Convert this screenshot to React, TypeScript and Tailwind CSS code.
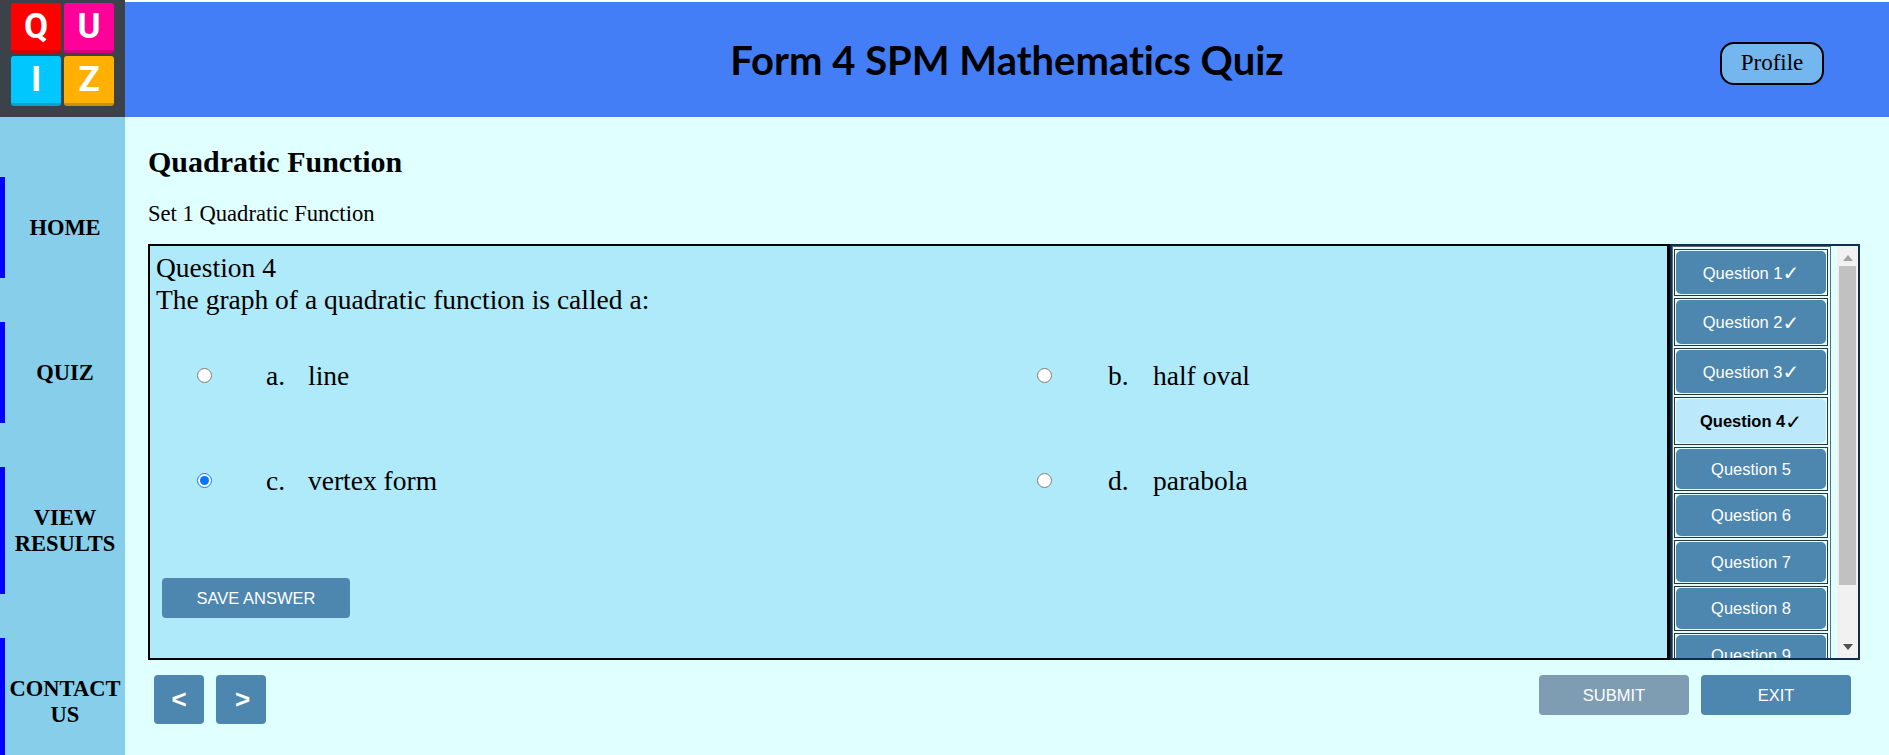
const nav = [
  { label: "HOME", h: "h-[101px]" },
  { label: "QUIZ", h: "h-[101px]" },
  { label: "VIEW RESULTS", h: "h-[127px]" },
  { label: "CONTACT US", h: "h-[127px]" },
];

const tiles = [
  { l: "Q", bg: "bg-[#ff0000]", b: "border-[#d80000]" },
  { l: "U", bg: "bg-[#ff0099]", b: "border-[#d80082]" },
  { l: "I", bg: "bg-[#00c8ff]", b: "border-[#00a3d0]" },
  { l: "Z", bg: "bg-[#ffb000]", b: "border-[#d08f00]" },
];

const questions = [
  { t: "Question 1", done: true, h: "h-[47px]" },
  { t: "Question 2", done: true, h: "h-[48px]" },
  { t: "Question 3", done: true, h: "h-[47px]" },
  { t: "Question 4", done: true, h: "h-[48px]", active: true },
  { t: "Question 5", h: "h-[44px]" },
  { t: "Question 6", h: "h-[45px]" },
  { t: "Question 7", h: "h-[44px]" },
  { t: "Question 8", h: "h-[45px]" },
  { t: "Question 9", h: "h-[45px]" },
];

function Option({ letter, text, checked, col, gap, w }: { letter: string; text: string; checked?: boolean; col: string; gap: string; w: string }) {
  return (
    <div className={`flex items-center h-[105px] ${col}`}>
      <input type="radio" readOnly checked={!!checked} name="q" className="w-[15px] h-[15px] m-0 shrink-0" />
      <span className={`${gap} ${w}`}>{letter}</span>
      <span>{text}</span>
    </div>
  );
}

export default function App() {
  return (
    <div className="flex h-[755px] w-[1889px] overflow-hidden font-['Liberation_Serif',serif] text-black">
      <aside className="w-[125px] shrink-0 flex flex-col bg-[#87ceeb] overflow-hidden">
        <div className="h-[117px] shrink-0 bg-[#3c4249] pl-[11px] pt-[3px]">
          <div className="grid grid-cols-[50px_50px] grid-rows-[50px_50px] gap-[3px]">
            {tiles.map((t) => (
              <div
                key={t.l}
                className={`${t.bg} ${t.b} border-b-[3px] rounded-[3px] flex items-center justify-center text-white font-bold text-[35px] leading-none font-['Roboto',sans-serif]`}
              >
                {t.l}
              </div>
            ))}
          </div>
        </div>
        <nav className="flex flex-col gap-[44px] pt-[60px]">
          {nav.map((n) => (
            <div
              key={n.label}
              className={`${n.h} shrink-0 border-l-[5px] border-[#0000ff] flex items-center justify-center text-center font-bold text-[22.5px] leading-[26px]`}
            >
              {n.label}
            </div>
          ))}
        </nav>
      </aside>

      <div className="flex-1 flex flex-col min-w-0 bg-[#e0ffff]">
        <header className="h-[117px] bg-white pt-[2px] shrink-0">
          <div className="h-[115px] bg-[#437ef7] flex items-center relative justify-center">
            <h1 className="font-bold text-[40px] font-['Lato',sans-serif] [font-variant-ligatures:none]">Form 4 SPM Mathematics Quiz</h1>
            <button className="absolute left-[1595px] top-[40px] w-[104px] h-[43px] rounded-[14px] border-[2px] border-black bg-[#74b6ee] text-[23px]">
              Profile
            </button>
          </div>
        </header>

        <main className="pl-[23px] pr-[29px] flex-1">
          <h2 className="font-bold text-[30px] leading-[31px] mt-[29px]">Quadratic Function</h2>
          <p className="text-[22.6px] leading-[26px] mt-[24px]">Set 1 Quadratic Function</p>

          <section className="flex h-[416px] mt-[17px]">
            <div className="w-[1522px] border-y-[2px] border-l-[2px] border-r-[3px] border-black bg-[#aeeaf9] pl-[6px] pt-[6px] text-[27.5px] leading-[32px]">
              <div>Question 4</div>
              <div>The graph of a quadratic function is called a:</div>
              <div className="grid grid-cols-[881px_1fr] mt-[7px]">
                <Option col="pl-[41px]" gap="ml-[54px]" w="w-[42px]" letter="a." text="line" />
                <Option col="" gap="ml-[56px]" w="w-[45px]" letter="b." text="half oval" />
                <Option col="pl-[41px]" gap="ml-[54px]" w="w-[42px]" letter="c." text="vertex form" checked />
                <Option col="" gap="ml-[56px]" w="w-[45px]" letter="d." text="parabola" />
              </div>
              <button className="block ml-[6px] mt-[45px] w-[188px] h-[40px] rounded-[4px] bg-[#4d86ae] text-white text-[16.5px] font-['Liberation_Sans',sans-serif]">
                SAVE ANSWER
              </button>
            </div>

            <div className="flex-1 border-[2px] border-[#0f2f4f] bg-[#e0ffff] flex overflow-hidden">
              <div className="w-[159px] shrink-0 border-x border-t border-[#666] flex flex-col gap-[2px] pl-[1px] pr-[2px] pt-[2px] overflow-hidden font-['Liberation_Sans',sans-serif] text-[16.5px]">
                {questions.map((q) => (
                  <div key={q.t} className={`${q.h} shrink-0 border border-[#333] p-[1px]`}>
                    <div
                      className={`h-full rounded-[5px] flex items-center justify-center ${q.done ? "pt-[1px]" : ""} ${
                        q.active ? "bg-[#bbe8fa] text-black font-bold" : "bg-[#4d86ae] text-white"
                      }`}
                    >
                      {q.t}
                      {q.done && <span className="font-['DejaVu_Sans',sans-serif] font-normal text-[20px] leading-none">✓</span>}
                    </div>
                  </div>
                ))}
              </div>
              <div className="ml-[6px] flex-1 bg-[#f1f1f1] flex flex-col">
                <div className="h-[20px] pt-[3px] flex items-center justify-center text-[#a3a3a3]">
                  <svg width="10" height="6" viewBox="0 0 10 6"><path d="M5 0l5 6H0z" fill="currentColor" /></svg>
                </div>
                <div className="h-[319px] mx-[2px] bg-[#c1c1c1]" />
                <div className="flex-1" />
                <div className="h-[20px] pb-[3px] flex items-center justify-center text-[#505050]">
                  <svg width="10" height="6" viewBox="0 0 10 6"><path d="M0 0h10L5 6z" fill="currentColor" /></svg>
                </div>
              </div>
            </div>
          </section>

          <div className="flex justify-between items-start mt-[15px] pl-[6px] pr-[9px] font-['Liberation_Sans',sans-serif] text-white">
            <div className="flex gap-[12px]">
              <button className="w-[50px] h-[49px] rounded-[4px] bg-[#4d86ae] font-bold text-[26px]">&lt;</button>
              <button className="w-[50px] h-[49px] rounded-[4px] bg-[#4d86ae] font-bold text-[26px] pl-[3px]">&gt;</button>
            </div>
            <div className="flex gap-[12px]">
              <button className="w-[150px] h-[40px] rounded-[4px] bg-[#7f9db2] text-[16.5px]">SUBMIT</button>
              <button className="w-[150px] h-[40px] rounded-[4px] bg-[#4d86ae] text-[16.5px]">EXIT</button>
            </div>
          </div>
        </main>
      </div>
    </div>
  );
}
